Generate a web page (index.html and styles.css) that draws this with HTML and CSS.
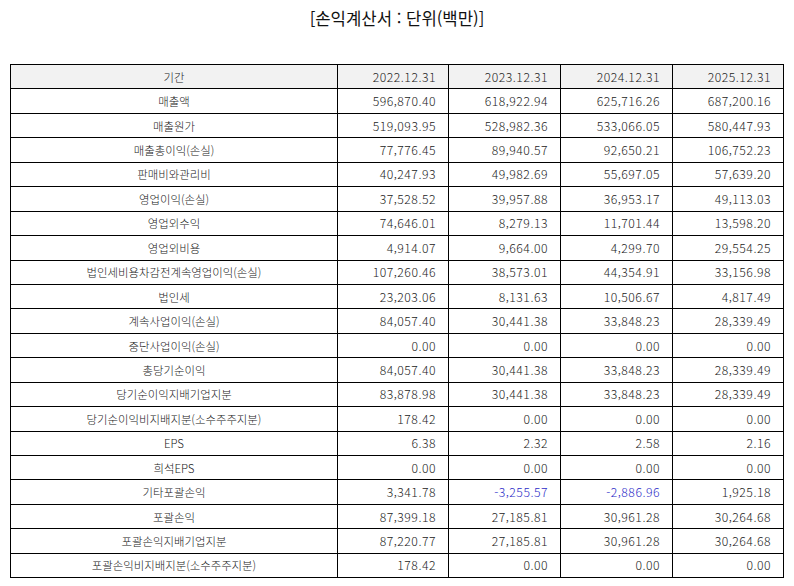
FILE: index.html
```html
<!DOCTYPE html>
<html lang="ko">
<head>
<meta charset="utf-8">
<title>손익계산서</title>
<link rel="stylesheet" href="styles.css">
</head>
<body>
<h1 class="title">[손익계산서 : 단위(백만)]</h1>
<table class="fin">
<colgroup><col class="c-label"><col class="c-num"><col class="c-num2"><col class="c-num2"><col class="c-num"></colgroup>
<thead>
<tr><th class="lbl">기간</th><th>2022.12.31</th><th>2023.12.31</th><th>2024.12.31</th><th>2025.12.31</th></tr>
</thead>
<tbody>
<tr><td class="lbl">매출액</td><td>596,870.40</td><td>618,922.94</td><td>625,716.26</td><td>687,200.16</td></tr>
<tr><td class="lbl">매출원가</td><td>519,093.95</td><td>528,982.36</td><td>533,066.05</td><td>580,447.93</td></tr>
<tr><td class="lbl">매출총이익(손실)</td><td>77,776.45</td><td>89,940.57</td><td>92,650.21</td><td>106,752.23</td></tr>
<tr><td class="lbl">판매비와관리비</td><td>40,247.93</td><td>49,982.69</td><td>55,697.05</td><td>57,639.20</td></tr>
<tr><td class="lbl">영업이익(손실)</td><td>37,528.52</td><td>39,957.88</td><td>36,953.17</td><td>49,113.03</td></tr>
<tr><td class="lbl">영업외수익</td><td>74,646.01</td><td>8,279.13</td><td>11,701.44</td><td>13,598.20</td></tr>
<tr><td class="lbl">영업외비용</td><td>4,914.07</td><td>9,664.00</td><td>4,299.70</td><td>29,554.25</td></tr>
<tr><td class="lbl">법인세비용차감전계속영업이익(손실)</td><td>107,260.46</td><td>38,573.01</td><td>44,354.91</td><td>33,156.98</td></tr>
<tr><td class="lbl">법인세</td><td>23,203.06</td><td>8,131.63</td><td>10,506.67</td><td>4,817.49</td></tr>
<tr><td class="lbl">계속사업이익(손실)</td><td>84,057.40</td><td>30,441.38</td><td>33,848.23</td><td>28,339.49</td></tr>
<tr><td class="lbl">중단사업이익(손실)</td><td>0.00</td><td>0.00</td><td>0.00</td><td>0.00</td></tr>
<tr><td class="lbl">총당기순이익</td><td>84,057.40</td><td>30,441.38</td><td>33,848.23</td><td>28,339.49</td></tr>
<tr><td class="lbl">당기순이익지배기업지분</td><td>83,878.98</td><td>30,441.38</td><td>33,848.23</td><td>28,339.49</td></tr>
<tr><td class="lbl">당기순이익비지배지분(소수주주지분)</td><td>178.42</td><td>0.00</td><td>0.00</td><td>0.00</td></tr>
<tr><td class="lbl">EPS</td><td>6.38</td><td>2.32</td><td>2.58</td><td>2.16</td></tr>
<tr><td class="lbl">희석EPS</td><td>0.00</td><td>0.00</td><td>0.00</td><td>0.00</td></tr>
<tr><td class="lbl">기타포괄손익</td><td>3,341.78</td><td class="neg">-3,255.57</td><td class="neg">-2,886.96</td><td>1,925.18</td></tr>
<tr><td class="lbl">포괄손익</td><td>87,399.18</td><td>27,185.81</td><td>30,961.28</td><td>30,264.68</td></tr>
<tr><td class="lbl">포괄손익지배기업지분</td><td>87,220.77</td><td>27,185.81</td><td>30,961.28</td><td>30,264.68</td></tr>
<tr><td class="lbl">포괄손익비지배지분(소수주주지분)</td><td>178.42</td><td>0.00</td><td>0.00</td><td>0.00</td></tr>
</tbody>
</table>
</body>
</html>
```

FILE: styles.css
```css
html, body {
  margin: 0;
  padding: 0;
  background: #fff;
}
body {
  font-family: "Noto Sans CJK KR", "Noto Sans", sans-serif;
  color: #111;
}
.title {
  margin: 0;
  padding-top: 6px;
  height: 64px;
  box-sizing: border-box;
  text-align: center;
  font-size: 16.7px;
  font-weight: normal;
  line-height: 24px;
  color: #111;
}
.fin {
  margin-left: 10px;
  width: 773px;
  border-collapse: collapse;
  table-layout: fixed;
  font-size: 12.2px;
  font-weight: 300;
  color: #222;
}
.c-label { width: 327px; }
.c-num { width: 111px; }
.c-num2 { width: 112px; }
.fin tr { height: 24.45px; }
.fin th, .fin td {
  border: 1px solid #000;
  padding: 0 12px 0 4px;
  text-align: right;
  font-weight: 300;
  line-height: 14px;
  letter-spacing: 0.5px;
  white-space: nowrap;
  vertical-align: middle;
}
.fin th { background: #f2f2f2; }
.fin .lbl {
  text-align: center;
  padding: 0 4px;
  font-size: 11.4px;
  letter-spacing: 0;
}
.fin .neg { color: #2b2bc8; }
```
